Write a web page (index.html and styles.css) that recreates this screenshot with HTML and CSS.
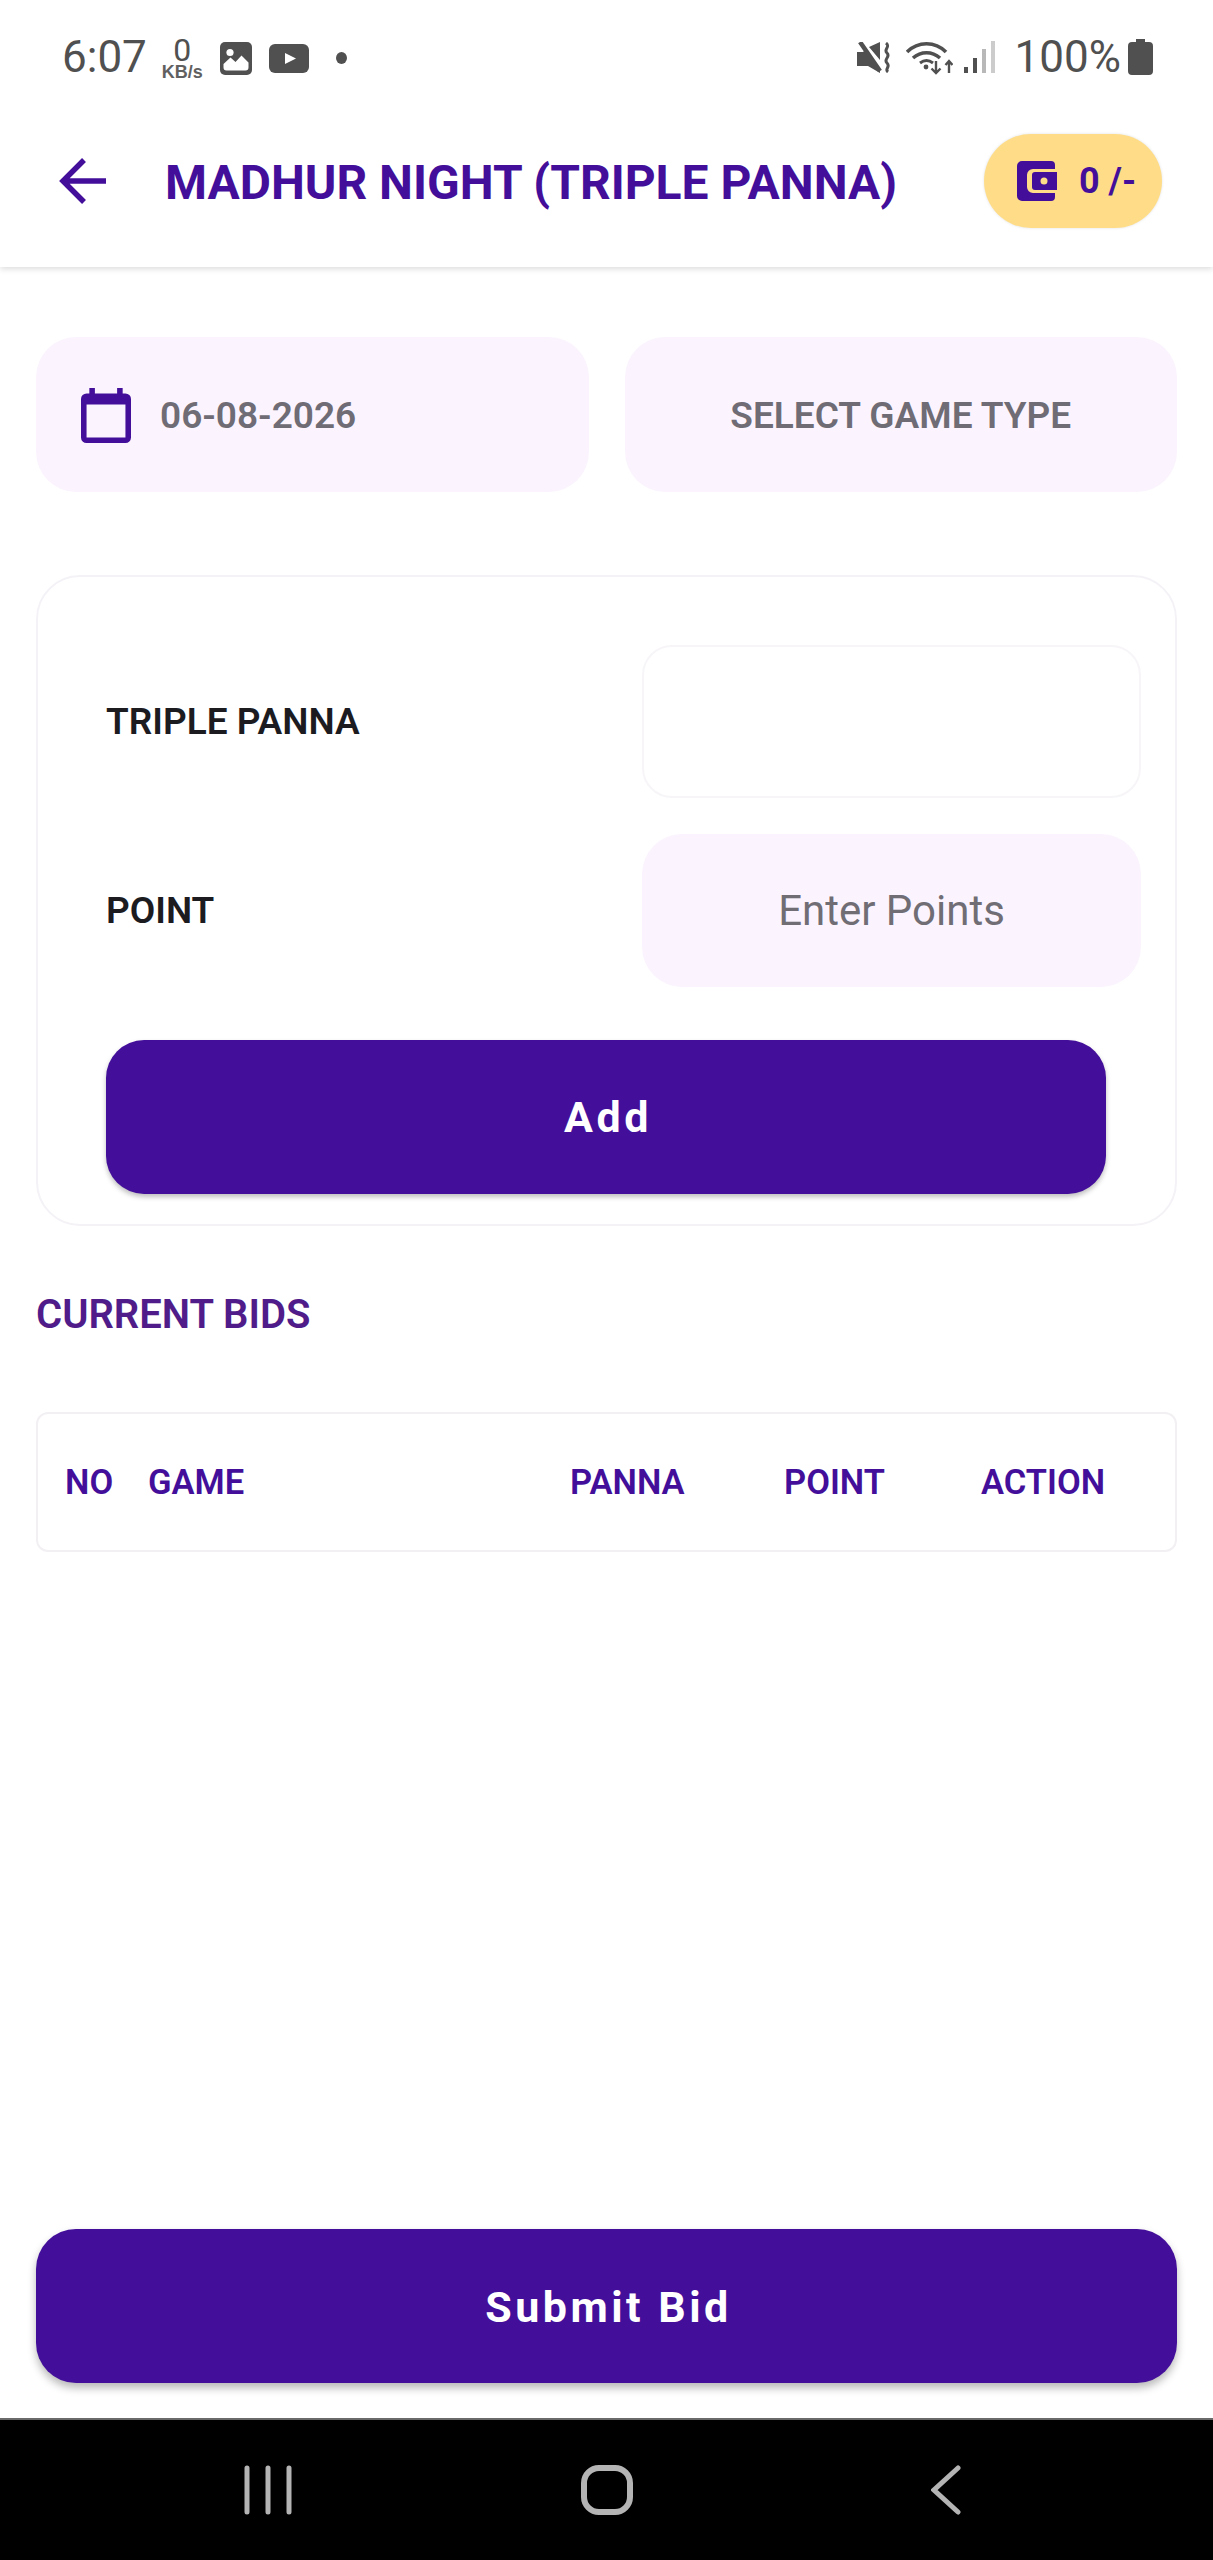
FILE: index.html
```html
<!DOCTYPE html>
<html>
	<head>
		<meta charset="UTF-8">
		<meta name="viewport" content="width=device-width, initial-scale=1.0">
		<title>Madhur Night (Triple Panna)</title>
		<link rel="stylesheet" href="styles.css">
	</head>
	<body>
		<div class="screen">
			<div class="header">
				<div class="statusBar">
					<span class="clock">6:07</span>
					<span class="speed"><span class="speedNum">0</span><span class="speedUnit">KB/s</span></span>
					<svg class="icoImage" viewBox="0 0 32 33">
						<rect width="32" height="33" rx="5" fill="#505050"/>
						<circle cx="10" cy="10.500" r="3.600" fill="#fff"/>
						<path d="M3.500 26v-4l7-6.500 5 4.500 6-6.500 7 7v5a3 3 0 0 1-3 3h-19a3 3 0 0 1-3-3z" fill="#fff"/>
					</svg>
					<svg class="icoVideo" viewBox="0 0 40 29">
						<rect width="40" height="29" rx="6" fill="#505050"/>
						<path d="M16 9l11 5.500-11 5.500z" fill="#fff"/>
					</svg>
					<span class="dot"></span>
					<span class="statusGap"></span>
					<svg class="icoMute" viewBox="0 0 34 31">
						<path d="M0 10h6l3-3 14 19v5l-12-7h-11zM12 5l11-5v18z" fill="#505050"/>
						<path d="M3 0l20 29" stroke="#505050" stroke-width="4.500"/>
						<path d="M29 1c5 4-3 6 1 10s-4 6 0 10-3 6 1 9" fill="none" stroke="#505050" stroke-width="3"/>
					</svg>
					<svg class="icoWifi" viewBox="0 0 47 35">
						<g fill="none" stroke="#505050" stroke-width="3.600">
							<path d="M1 12c11-11 28-11 39 0"/>
							<path d="M7 18c8-7 19-7 27 0"/>
						</g>
						<path d="M14 23c4-3 9-3 13 0" fill="none" stroke="#505050" stroke-width="3"/>
						<circle cx="20" cy="27" r="2.400" fill="#505050"/>
						<path d="M30 21v12m-4.500-4.500l4.500 4.500 4.500-4.500M43 33v-12m-3.500 4l3.500-4 3.500 4" fill="none" stroke="#505050" stroke-width="2.400"/>
					</svg>
					<svg class="icoSignal" viewBox="0 0 31 32">
						<rect x="0" y="26" width="4" height="6" fill="#505050"/>
						<rect x="9" y="17" width="4" height="15" fill="#505050"/>
						<rect x="18" y="8" width="4" height="24" fill="#b8b8b8"/>
						<rect x="27" y="0" width="4" height="32" fill="#cccccc"/>
					</svg>
					<span class="battery">100%</span>
					<svg class="icoBattery" viewBox="0 0 25 36">
						<path d="M8 0h9v3h4a4 4 0 0 1 4 4v25a4 4 0 0 1-4 4h-17a4 4 0 0 1-4-4v-25a4 4 0 0 1 4-4h4z" fill="#505050"/>
					</svg>
				</div>

				<div class="topBar">
					<svg class="backArrow" viewBox="0 0 47 46">
						<path d="M4 23h43M25 2l-21 21 21 21" fill="none" stroke="#430f9a" stroke-width="5.500"/>
					</svg>
					<h1 class="pageTitle">MADHUR NIGHT (TRIPLE PANNA)</h1>
					<div class="walletPill">
						<svg class="icoWallet" viewBox="0 0 40 40">
							<path d="M5 0h29a4 4 0 0 1 4 4v4h-22a6 6 0 0 0-6 6v12a6 6 0 0 0 6 6h22v4a4 4 0 0 1-4 4h-29a5 5 0 0 1-5-5v-30a5 5 0 0 1 5-5z" fill="#430f9a"/>
							<path d="M18 11h22v18h-22a3 3 0 0 1-3-3v-12a3 3 0 0 1 3-3z" fill="#430f9a"/>
							<circle cx="27" cy="20" r="3.500" fill="#ffdd88"/>
						</svg>
						<span class="walletText">0 /-</span>
					</div>
				</div>
			</div>

			<div class="content">
				<div class="pickRow">
					<div class="pickBox">
						<svg class="icoCal" viewBox="0 0 18 20" preserveAspectRatio="none">
							<path d="M16 2h-1V0h-2v2H5V0H3v2H2a2 2 0 0 0-2 2v14a2 2 0 0 0 2 2h14a2 2 0 0 0 2-2V4a2 2 0 0 0-2-2zm0 16H2V6h14v12z" fill="#430f9a"/>
						</svg>
						<span class="pickText">06-08-2026</span>
					</div>
					<div class="pickBox center">
						<span class="pickText">SELECT GAME TYPE</span>
					</div>
				</div>

				<div class="bidCard">
					<div class="formRow">
						<label class="formLabel">TRIPLE PANNA</label>
						<input class="formInput plain" type="text">
					</div>
					<div class="formRow">
						<label class="formLabel">POINT</label>
						<input class="formInput" type="text" placeholder="Enter Points">
					</div>
					<button class="bigBtn addBtn" type="button">Add</button>
				</div>

				<h2 class="bidsTitle">CURRENT BIDS</h2>

				<div class="bidsTable">
					<span>NO</span>
					<span>GAME</span>
					<span>PANNA</span>
					<span>POINT</span>
					<span>ACTION</span>
				</div>

				<button class="bigBtn submitBtn" type="button">Submit Bid</button>
			</div>

			<div class="navBar">
				<svg class="navBars" viewBox="0 0 48 50">
					<path d="M3 3v44M24 3v44M45 3v44" stroke="#b4b4b4" stroke-width="5" stroke-linecap="round"/>
				</svg>
				<svg class="navHome" viewBox="0 0 52 52">
					<rect x="3" y="4" width="46" height="44" rx="15" fill="none" stroke="#b4b4b4" stroke-width="6"/>
				</svg>
				<svg class="navBack" viewBox="0 0 30 50">
					<path d="M27 3l-24 22 24 22" fill="none" stroke="#b4b4b4" stroke-width="5" stroke-linecap="round"/>
				</svg>
			</div>
		</div>
	</body>
</html>
```

FILE: styles.css
```css
*{
	box-sizing: border-box;
}
body{
	margin: 0;
	background-color: #fff;
	font-family: Roboto, "Liberation Sans", sans-serif;
}
.screen{
	width: 1213px;
	height: 2560px;
	display: flex;
	flex-direction: column;
	overflow: hidden;
}
.header{
	height: 267px;
	background-color: #fff;
	box-shadow: 0 2px 6px rgba(0,0,0,0.14);
}

/* status bar */
.statusBar{
	height: 116px;
	padding: 0 60px 0 62px;
	display: flex;
	align-items: flex-start;
	color: #505050;
}
.clock{
	margin: 32px 15px 0 0;
	font-size: 44px;
	line-height: 50px;
}
.speed{
	margin-top: 38px;
	width: 41px;
	display: flex;
	flex-direction: column;
	align-items: center;
}
.speedNum{
	font-size: 32px;
	line-height: 24px;
}
.speedUnit{
	font-family: "Liberation Sans", sans-serif;
	font-size: 18px;
	font-weight: 700;
	line-height: 20px;
	color: #606060;
	white-space: nowrap;
}
.icoImage{
	margin: 42px 0 0 17px;
	width: 32px;
	height: 33px;
}
.icoVideo{
	margin: 44px 0 0 17px;
	width: 40px;
	height: 29px;
}
.dot{
	margin: 52px 0 0 27px;
	width: 11px;
	height: 12px;
	border-radius: 50%;
	background-color: #505050;
}
.statusGap{
	flex: 1;
}
.icoMute{
	margin: 42px 0 0 0;
	width: 34px;
	height: 31px;
}
.icoWifi{
	margin: 40px 0 0 15px;
	width: 47px;
	height: 35px;
}
.icoSignal{
	margin: 41px 0 0 11px;
	width: 31px;
	height: 32px;
}
.battery{
	margin: 32px 0 0 20px;
	font-size: 44px;
	line-height: 50px;
}
.icoBattery{
	margin: 39px 0 0 7px;
	width: 25px;
	height: 36px;
}

/* title bar */
.topBar{
	height: 130px;
	padding: 0 51px 0 59px;
	display: flex;
	align-items: center;
}
.backArrow{
	width: 47px;
	height: 46px;
}
.pageTitle{
	margin: 4px 0 0 59px;
	font-size: 48px;
	font-weight: 700;
	line-height: 54px;
	color: #430f9a;
	white-space: nowrap;
}
.walletPill{
	margin-left: auto;
	width: 178px;
	height: 94px;
	border-radius: 47px;
	background-color: #ffdd88;
	box-shadow: 0 0 3px rgba(0,0,0,0.12);
	display: flex;
	align-items: center;
	padding-left: 33px;
	flex-shrink: 0;
}
.icoWallet{
	width: 40px;
	height: 40px;
}
.walletText{
	margin-left: 22px;
	font-size: 36px;
	font-weight: 700;
	color: #430f9a;
	white-space: nowrap;
}

/* main */
.content{
	flex: 1;
	padding: 70px 36px 35px 36px;
	display: flex;
	flex-direction: column;
}
.pickRow{
	display: grid;
	grid-template-columns: 1fr 1fr;
	gap: 36px;
}
.pickBox{
	height: 155px;
	border-radius: 40px;
	background-color: #fbf4fe;
	display: flex;
	align-items: center;
	padding: 2px 0 0 45px;
}
.pickBox.center{
	justify-content: center;
	padding-left: 0;
}
.icoCal{
	width: 50px;
	height: 55px;
}
.pickText{
	margin-left: 29px;
	font-size: 37px;
	font-weight: 600;
	color: #6f6c75;
	white-space: nowrap;
}
.center .pickText{
	margin-left: 0;
}
.bidCard{
	margin-top: 83px;
	height: 651px;
	padding: 68px 34px 0 68px;
	border: 2px solid #f4f2f6;
	border-radius: 44px;
	background-color: #fff;
}
.formRow{
	display: flex;
	justify-content: space-between;
	align-items: center;
	margin-bottom: 36px;
}
.formLabel{
	font-size: 37px;
	font-weight: 600;
	color: #1c1b1f;
}
.formInput{
	width: 499px;
	height: 153px;
	border: none;
	border-radius: 40px;
	background-color: #fbf4fe;
	text-align: center;
	font-family: Roboto, sans-serif;
	font-size: 42px;
	color: #6f6c75;
}
.formInput::placeholder{
	color: #706d75;
	opacity: 1;
}
.formInput.plain{
	border: 2px solid #f7f5f8;
	border-radius: 30px;
	background-color: #fff;
}
.bigBtn{
	display: block;
	border: none;
	padding: 0 0 0 4px;
	border-radius: 38px;
	background-color: #430f9a;
	color: #fff;
	font-family: Roboto, sans-serif;
	font-weight: 700;
	font-size: 43px;
	letter-spacing: 3.5px;
	box-shadow: 0 3px 5px rgba(0,0,0,0.25);
}
.addBtn{
	margin-top: 53px;
	width: 1000px;
	height: 154px;
}
.bidsTitle{
	margin: 66px 0 0 0;
	font-size: 40px;
	font-weight: 600;
	line-height: 46px;
	color: #4f1c8a;
}
.bidsTable{
	margin-top: 74px;
	height: 140px;
	padding-left: 27px;
	border: 2px solid #f3f0f4;
	border-radius: 12px;
	display: grid;
	grid-template-columns: 83px 422px 214px 197px auto;
	align-items: center;
	font-size: 34.5px;
	font-weight: 600;
	color: #430f9a;
}
.submitBtn{
	margin-top: auto;
	width: 1141px;
	height: 154px;
	padding-top: 2px;
	border-radius: 40px;
	box-shadow: 0 5px 8px rgba(0,0,0,0.28);
}

/* android nav */
.navBar{
	height: 142px;
	background-color: #000;
	border-top: 2px solid #6a6a6a;
	display: grid;
	grid-template-columns: repeat(3, 339px);
	justify-content: center;
	justify-items: center;
	align-items: center;
}
.navBars{
	width: 48px;
	height: 50px;
}
.navHome{
	width: 52px;
	height: 52px;
}
.navBack{
	width: 30px;
	height: 50px;
}
```
